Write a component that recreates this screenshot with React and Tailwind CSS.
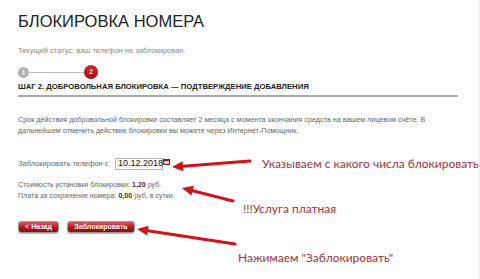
const Arrow = ({ x1, y1, x2, y2 }) => {
  const a = Math.atan2(y2 - y1, x2 - x1);
  const len = 11;
  const w = 5;
  const bx = x2 - Math.cos(a) * len;
  const by = y2 - Math.sin(a) * len;
  const px = -Math.sin(a) * w;
  const py = Math.cos(a) * w;
  return (
    <g>
      <line x1={x1} y1={y1} x2={bx} y2={by} stroke="#d3121b" strokeWidth="3" strokeLinecap="round" />
      <polygon points={`${x2},${y2} ${bx + px},${by + py} ${bx - px},${by - py}`} fill="#d3121b" />
    </g>
  );
};

const RedButton = ({ children, className = '' }) => (
  <button
    className={`h-[12px] rounded-[3px] border border-[#9a9a9a] bg-gradient-to-b from-[#d95a5f] via-[#b8141b] to-[#8e0c10] px-[5px] text-[7px] font-bold leading-[10px] text-white shadow-[0_1px_1px_rgba(0,0,0,0.3)] ${className}`}
  >
    {children}
  </button>
);

export default function App() {
  return (
    <div className="relative h-[279px] w-[480px] overflow-hidden bg-white font-['Liberation_Sans',Arial,sans-serif] text-[#555]">
      <div className="h-full border-r border-[#eeeeee] pl-[18px] pr-[21px] pt-[9px]">
        <h1 className="text-[16.5px] font-normal leading-[24px] text-[#222]">
          БЛОКИРОВКА НОМЕРА
        </h1>

        <p className="mt-[13px] text-[7.5px] leading-[10px] text-[#8a8a8a]">
          Текущий статус: ваш телефон не заблокирован.
        </p>

        <div className="mt-[9px] flex items-center">
          <div className="flex h-[11px] w-[11px] items-center justify-center rounded-full bg-[#b3b3b3] text-[6px] font-bold text-white">
            1
          </div>
          <div className="h-px w-[55px] bg-[#bdbdbd]" />
          <div className="flex h-[14px] w-[14px] items-center justify-center rounded-full bg-gradient-to-b from-[#d8262d] to-[#a30d12] text-[7px] font-bold text-white">
            2
          </div>
        </div>

        <div className="mt-[2px] border-b-2 border-[#a9a9a9] pb-[3px]">
          <h2 className="text-[7.7px] font-bold leading-[11px] text-[#222]">
            ШАГ 2. ДОБРОВОЛЬНАЯ БЛОКИРОВКА — ПОДТВЕРЖДЕНИЕ ДОБАВЛЕНИЯ
          </h2>
        </div>

        <p className="mt-[17px] whitespace-nowrap text-[7.2px] leading-[11px] text-[#666]">
          Срок действия добровольной блокировки составляет 2 месяца с момента окончания средств на вашем лицевом счёте. В
          <br />
          дальнейшем отменить действие блокировки вы можете через Интернет-Помощник.
        </p>

        <div className="mt-[22px] flex items-center text-[7.1px] text-[#666]">
          <span className="w-[97px] shrink-0 whitespace-nowrap text-[7.5px]">Заблокировать телефон с</span>
          <div className="flex h-[12px] w-[48px] items-center border border-[#b5b5b5] pl-[2px] text-[9px] text-[#111]">
            10.12.2018
          </div>
          <svg width="7" height="6" viewBox="0 0 7 6" className="-mt-[4px]">
            <rect x="0" y="0" width="7" height="6" fill="#8c1b1f" />
            <rect x="1" y="2" width="5" height="3" fill="#e8c5c5" />
          </svg>
        </div>

        <div className="mt-[10px] text-[7.1px] leading-[11px] text-[#666]">
          <p>
            Стоимость установки блокировки: <b className="text-[#333]">1,20</b> руб.
          </p>
          <p>
            Плата за сохранение номера: <b className="text-[#333]">0,00</b> руб. в сутки.
          </p>
        </div>

        <div className="mt-[19px] flex gap-[8px]">
          <RedButton className="w-[41px]">&lt; Назад</RedButton>
          <RedButton className="w-[68px]">Заблокировать</RedButton>
        </div>
      </div>

      <div className="pointer-events-none absolute inset-0 font-['Lato',sans-serif] text-[12px] text-[#9e3440]">
        <svg width="480" height="279" className="absolute left-0 top-0">
          <Arrow x1={250} y1={161} x2={172} y2={167} />
          <Arrow x1={233} y1={201} x2={182} y2={188} />
          <Arrow x1={235} y1={244} x2={137} y2={229} />
        </svg>
        <span className="absolute left-[262px] top-[155px] whitespace-nowrap">Указываем с какого числа блокировать</span>
        <span className="absolute left-[243px] top-[200px] whitespace-nowrap">!!!Услуга платная</span>
        <span className="absolute left-[238px] top-[249px] whitespace-nowrap">Нажимаем "Заблокировать"</span>
      </div>
    </div>
  );
}
